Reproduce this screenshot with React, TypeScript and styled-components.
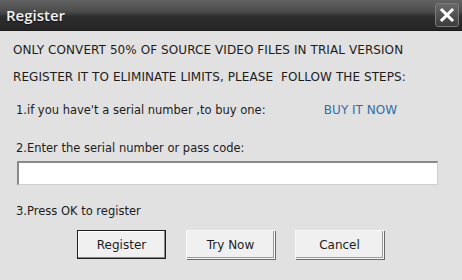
import React from 'react';
import styled, { createGlobalStyle } from 'styled-components';

const GlobalStyle = createGlobalStyle`
  html, body {
    margin: 0;
    padding: 0;
    background: #e1e1e1;
  }
  body {
    font-family: 'DejaVu Sans', Tahoma, sans-serif;
  }
`;

const Dialog = styled.div`
  width: 462px;
  height: 280px;
  display: flex;
  flex-direction: column;
  background: #e1e1e1;
  overflow: hidden;
`;

const TitleBar = styled.div`
  height: 31px;
  display: flex;
  align-items: center;
  justify-content: space-between;
  padding: 0 3px 0 6px;
  background: linear-gradient(#636363 0%, #4a4a4a 40%, #2e2e2e 55%, #262626 100%);
  border-bottom: 1px solid #1a1a1a;
  box-sizing: border-box;
`;

const Title = styled.div`
  color: #f2f2f2;
  font-family: 'Open Sans', 'DejaVu Sans', sans-serif;
  font-weight: 600;
  font-size: 15px;
  text-shadow: 0 1px 1px rgba(0, 0, 0, 0.6);
`;

const CloseButton = styled.div`
  width: 24px;
  height: 24px;
  border: 1px solid #7a7a7a;
  border-radius: 3px;
  background: linear-gradient(#6a6a6a, #3c3c3c);
  display: flex;
  align-items: center;
  justify-content: center;
  box-sizing: border-box;
`;

const Body = styled.div`
  flex: 1;
  display: flex;
  flex-direction: column;
  padding: 6px 24px 0 13px;
  color: #1c1c1c;
  font-size: 12px;
`;

const Notice = styled.div`
  line-height: 27px;
  letter-spacing: 0.08px;
`;

const Step = styled.div<{ $top: number }>`
  margin-top: ${({ $top }) => $top}px;
  display: flex;
  align-items: center;
  line-height: 16px;
  padding-left: 3px;
  font-size: 11.5px;
`;

const BuyLink = styled.span`
  margin-left: auto;
  margin-right: 41px;
  font-size: 12px;
  color: #2f6ea8;
`;

const SerialInput = styled.input`
  margin: 5px 0 0 4px;
  width: 421px;
  height: 24px;
  box-sizing: border-box;
  border: 1px solid #cfcfcf;
  border-top: 2px solid #8a8a8a;
  border-left: 2px solid #8a8a8a;
  background: #fff;
  outline: none;
`;

const ButtonRow = styled.div`
  margin-top: 11px;
  padding-left: 64px;
  display: flex;
  gap: 20px;
`;

const Button = styled.div<{ $default?: boolean }>`
  width: 89px;
  height: 29px;
  box-sizing: border-box;
  display: flex;
  align-items: center;
  justify-content: center;
  font-size: 12px;
  color: #1c1c1c;
  background: #f0f0f0;
  border: 1px solid ${({ $default }) => ($default ? '#1e1e1e' : '#f8f8f8')};
  box-shadow: ${({ $default }) =>
    $default
      ? 'inset -1px -1px 0 #888, inset 1px 1px 0 #fff'
      : 'inset -1px -1px 0 #9a9a9a, 1px 1px 0 #6a6a6a'};
`;

export default function App() {
  return (
    <>
      <GlobalStyle />
      <Dialog>
        <TitleBar>
          <Title>Register</Title>
          <CloseButton>
            <svg width="16" height="16" viewBox="0 0 16 16">
              <path d="M3 3 L13 13 M13 3 L3 13" stroke="#fff" strokeWidth="3" strokeLinecap="square" />
            </svg>
          </CloseButton>
        </TitleBar>
        <Body>
          <Notice>
            ONLY CONVERT 50% OF SOURCE VIDEO FILES IN TRIAL VERSION
            <br />
            REGISTER IT TO ELIMINATE LIMITS, PLEASE&nbsp; FOLLOW THE STEPS:
          </Notice>
          <Step $top={11}>
            1.if you have't a serial number ,to buy one:
            <BuyLink>BUY IT NOW</BuyLink>
          </Step>
          <Step $top={22}>2.Enter the serial number or pass code:</Step>
          <SerialInput />
          <Step $top={18}>3.Press OK to register</Step>
          <ButtonRow>
            <Button $default>Register</Button>
            <Button>Try Now</Button>
            <Button>Cancel</Button>
          </ButtonRow>
        </Body>
      </Dialog>
    </>
  );
}
